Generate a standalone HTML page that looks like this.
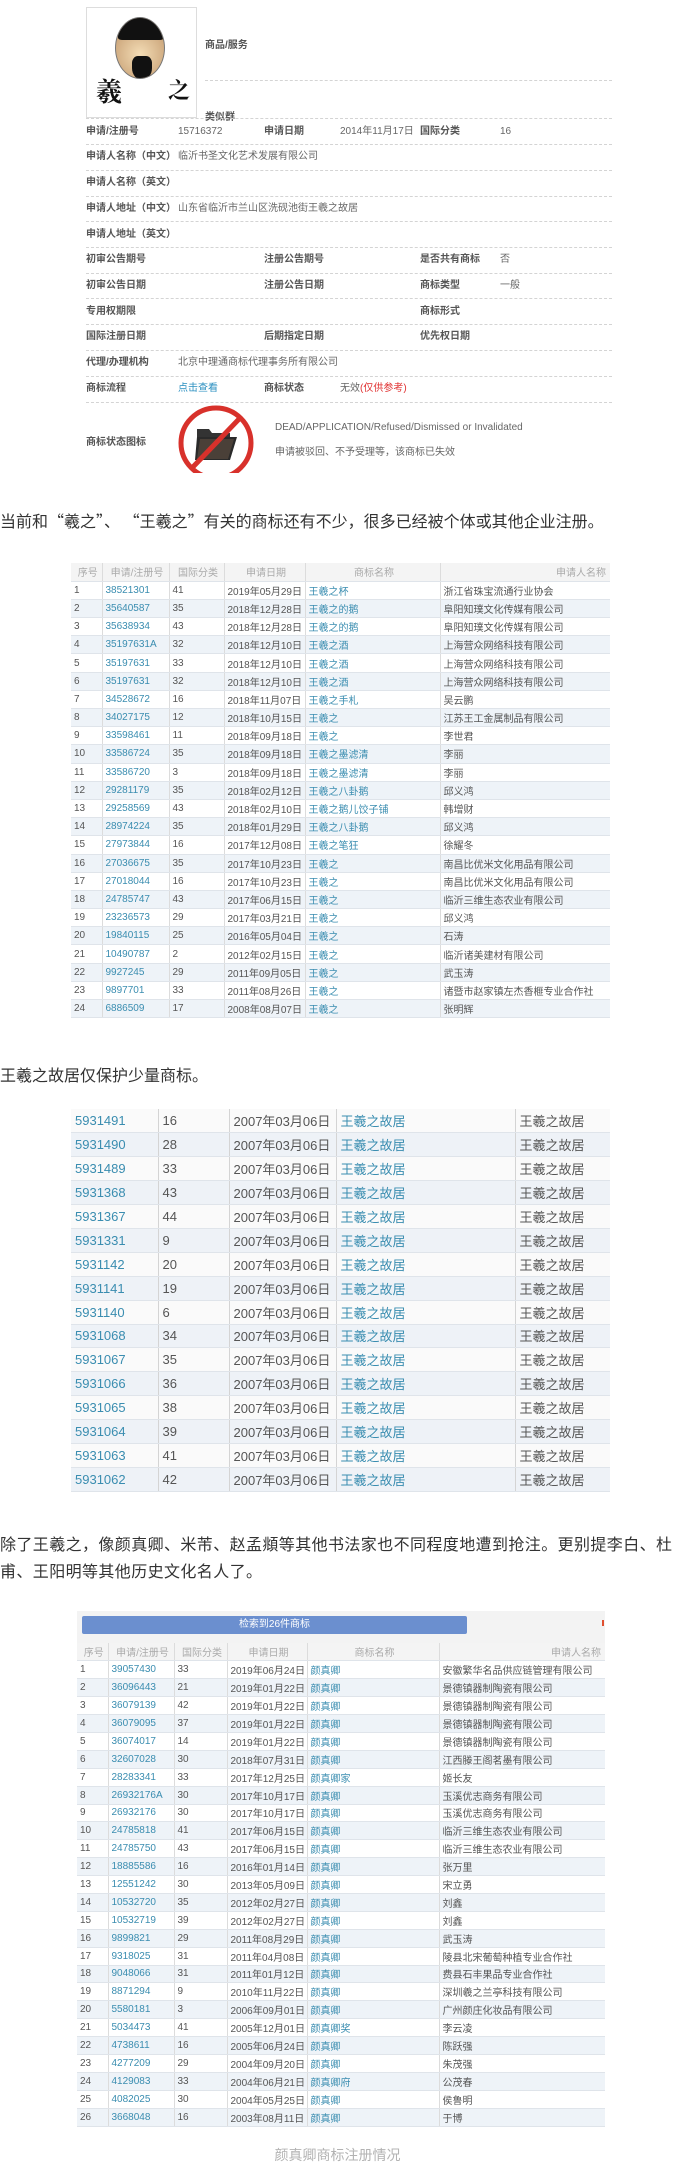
<!DOCTYPE html>
<html><head><meta charset="utf-8">
<style>
*{margin:0;padding:0;box-sizing:border-box}
body{width:675px;height:2176px;background:#fff;position:relative;overflow:hidden;font-family:"Liberation Sans","Noto Sans CJK SC",sans-serif;color:#333}
.a{position:absolute;white-space:nowrap}
.lb{font-size:10px;font-weight:bold;color:#555;line-height:12px}
.vl{font-size:10px;color:#666;line-height:12px}
.hl{position:absolute;left:86px;width:526px;border-top:1px dashed #d4d4d4;height:0}
.p{position:absolute;left:0;font-size:16px;color:#333;white-space:nowrap;line-height:20px;font-family:"Noto Sans CJK SC","WenQuanYi Zen Hei",sans-serif}
table{position:absolute;border-collapse:collapse;table-layout:fixed}
td{white-space:nowrap;overflow:hidden;padding:0 0 0 3px;border-bottom:1px solid #dfe4ea;border-left:1px solid #dcdcdc;color:#555}
td:first-child{border-left:none}
.lk{color:#3a8db0}
tr.h td{background:#f4f4f4;color:#aaa;text-align:center}
tr:nth-child(odd):not(.h) td{background:#eef3f8}
#t2{left:71px;top:563px;width:539px;font-size:10px}
#t2 tr{height:18.2px}
#t3{left:71px;top:1109px;width:539px;font-size:13px}
#t3 tr{height:23.9px}
#t3 td{padding-left:4px;border-left:1px solid #d4d4d4}
#t3 td:first-child{border-left:none}
#t3 tr:nth-child(even) td{background:#eef2f7}
#t3 tr:nth-child(odd) td{background:#fafafa}
#t4{left:77px;top:1643px;width:528px;font-size:10px}
#t4 tr{height:17.9px}
</style></head><body>

<div class="a" style="left:86px;top:7px;width:111px;height:111px;border:1px solid #ddd;background:#fff"></div>
<div class="a" style="left:115px;top:17px;width:50px;height:62px;border-radius:50%;background:radial-gradient(circle at 50% 60%,#f3dcb5,#c9a277 70%,#6b4a2a);border:1px solid #777;overflow:hidden">
  <div style="position:absolute;left:2px;top:0;width:46px;height:22px;background:#111;border-radius:40% 40% 10% 10%"></div>
  <div style="position:absolute;left:16px;top:38px;width:20px;height:24px;background:#111;border-radius:30% 30% 50% 50%"></div>
</div>
<div class="a" style="left:96px;top:72px;font-size:26px;font-weight:bold;font-family:'Noto Serif CJK SC',serif;color:#111">羲</div>
<div class="a" style="left:168px;top:74px;font-size:22px;font-weight:bold;font-family:'Noto Serif CJK SC',serif;color:#111">之</div>
<div class="a lb" style="left:205px;top:40px">商品/服务</div>
<div class="hl" style="left:205px;width:407px;top:80px"></div>
<div class="a lb" style="left:205px;top:112px">类似群</div>
<div class="hl" style="top:118px"></div>
<div class="a lb" style="left:86px;top:126px">申请/注册号</div><div class="a vl" style="left:178px;top:126px">15716372</div>
<div class="a lb" style="left:264px;top:126px">申请日期</div><div class="a vl" style="left:340px;top:126px">2014年11月17日</div>
<div class="a lb" style="left:420px;top:126px">国际分类</div><div class="a vl" style="left:500px;top:126px">16</div>
<div class="hl" style="top:144px"></div>
<div class="a lb" style="left:86px;top:151px">申请人名称（中文）</div><div class="a vl" style="left:178px;top:151px">临沂书圣文化艺术发展有限公司</div>
<div class="hl" style="top:170px"></div>
<div class="a lb" style="left:86px;top:177px">申请人名称（英文）</div>
<div class="hl" style="top:196px"></div>
<div class="a lb" style="left:86px;top:203px">申请人地址（中文）</div><div class="a vl" style="left:178px;top:203px">山东省临沂市兰山区洗砚池街王羲之故居</div>
<div class="hl" style="top:221px"></div>
<div class="a lb" style="left:86px;top:229px">申请人地址（英文）</div>
<div class="hl" style="top:247px"></div>
<div class="a lb" style="left:86px;top:254px">初审公告期号</div><div class="a lb" style="left:264px;top:254px">注册公告期号</div><div class="a lb" style="left:420px;top:254px">是否共有商标</div><div class="a vl" style="left:500px;top:254px">否</div>
<div class="hl" style="top:273px"></div>
<div class="a lb" style="left:86px;top:280px">初审公告日期</div><div class="a lb" style="left:264px;top:280px">注册公告日期</div><div class="a lb" style="left:420px;top:280px">商标类型</div><div class="a vl" style="left:500px;top:280px">一般</div>
<div class="hl" style="top:298px"></div>
<div class="a lb" style="left:86px;top:306px">专用权期限</div><div class="a lb" style="left:420px;top:306px">商标形式</div>
<div class="hl" style="top:324px"></div>
<div class="a lb" style="left:86px;top:331px">国际注册日期</div><div class="a lb" style="left:264px;top:331px">后期指定日期</div><div class="a lb" style="left:420px;top:331px">优先权日期</div>
<div class="hl" style="top:350px"></div>
<div class="a lb" style="left:86px;top:357px">代理/办理机构</div><div class="a vl" style="left:178px;top:357px">北京中理通商标代理事务所有限公司</div>
<div class="hl" style="top:376px"></div>
<div class="a lb" style="left:86px;top:383px">商标流程</div><div class="a vl" style="left:178px;top:383px;color:#2a8fc0">点击查看</div>
<div class="a lb" style="left:264px;top:383px">商标状态</div><div class="a vl" style="left:340px;top:383px">无效<span style="color:#e03030">(仅供参考)</span></div>
<div class="hl" style="top:402px"></div>
<div class="a lb" style="left:86px;top:437px">商标状态图标</div>
<svg class="a" style="left:176px;top:403px" width="80" height="70" viewBox="0 0 80 70">
  <defs><clipPath id="c"><rect x="0" y="0" width="80" height="70"/></clipPath></defs>
  <g clip-path="url(#c)">
  <path d="M21 26 h12 l3 4 h18 v4 H21z" fill="#333"/>
  <path d="M21 34 h35 l5 0 -7 23 H19z" fill="#2a2a2a"/>
  <path d="M24 36 h34 l-6 20 H21z" fill="#4a4038"/>
  <circle cx="40" cy="40" r="35" fill="none" stroke="#d8312b" stroke-width="5"/>
  <line x1="64" y1="15" x2="15" y2="66" stroke="#d8312b" stroke-width="5"/>
  </g>
</svg>
<div class="a vl" style="left:275px;top:422px;font-size:10px;color:#666">DEAD/APPLICATION/Refused/Dismissed or Invalidated</div>
<div class="a vl" style="left:275px;top:447px">申请被驳回、不予受理等，该商标已失效</div>

<div class="p" style="top:510px">当前和“羲之”、 “王羲之”有关的商标还有不少，很多已经被个体或其他企业注册。</div>

<table id="t2">
<colgroup><col style="width:31px"><col style="width:67px"><col style="width:55px"><col style="width:81px"><col style="width:135px"><col style="width:170px"></colgroup>
<tr class="h"><td>序号</td><td>申请/注册号</td><td>国际分类</td><td>申请日期</td><td>商标名称</td><td style="text-align:right;padding-right:4px">申请人名称</td></tr>
<tr><td>1</td><td class="lk">38521301</td><td>41</td><td>2019年05月29日</td><td class="lk">王羲之杯</td><td>浙江省珠宝流通行业协会</td></tr>
<tr><td>2</td><td class="lk">35640587</td><td>35</td><td>2018年12月28日</td><td class="lk">王羲之的鹅</td><td>阜阳知璞文化传媒有限公司</td></tr>
<tr><td>3</td><td class="lk">35638934</td><td>43</td><td>2018年12月28日</td><td class="lk">王羲之的鹅</td><td>阜阳知璞文化传媒有限公司</td></tr>
<tr><td>4</td><td class="lk">35197631A</td><td>32</td><td>2018年12月10日</td><td class="lk">王羲之酒</td><td>上海营众网络科技有限公司</td></tr>
<tr><td>5</td><td class="lk">35197631</td><td>33</td><td>2018年12月10日</td><td class="lk">王羲之酒</td><td>上海营众网络科技有限公司</td></tr>
<tr><td>6</td><td class="lk">35197631</td><td>32</td><td>2018年12月10日</td><td class="lk">王羲之酒</td><td>上海营众网络科技有限公司</td></tr>
<tr><td>7</td><td class="lk">34528672</td><td>16</td><td>2018年11月07日</td><td class="lk">王羲之手札</td><td>吴云鹏</td></tr>
<tr><td>8</td><td class="lk">34027175</td><td>12</td><td>2018年10月15日</td><td class="lk">王羲之</td><td>江苏王工金属制品有限公司</td></tr>
<tr><td>9</td><td class="lk">33598461</td><td>11</td><td>2018年09月18日</td><td class="lk">王羲之</td><td>李世君</td></tr>
<tr><td>10</td><td class="lk">33586724</td><td>35</td><td>2018年09月18日</td><td class="lk">王羲之墨滤清</td><td>李丽</td></tr>
<tr><td>11</td><td class="lk">33586720</td><td>3</td><td>2018年09月18日</td><td class="lk">王羲之墨滤清</td><td>李丽</td></tr>
<tr><td>12</td><td class="lk">29281179</td><td>35</td><td>2018年02月12日</td><td class="lk">王羲之八卦鹅</td><td>邱义鸿</td></tr>
<tr><td>13</td><td class="lk">29258569</td><td>43</td><td>2018年02月10日</td><td class="lk">王羲之鹅儿饺子铺</td><td>韩增财</td></tr>
<tr><td>14</td><td class="lk">28974224</td><td>35</td><td>2018年01月29日</td><td class="lk">王羲之八卦鹅</td><td>邱义鸿</td></tr>
<tr><td>15</td><td class="lk">27973844</td><td>16</td><td>2017年12月08日</td><td class="lk">王羲之笔狂</td><td>徐耀冬</td></tr>
<tr><td>16</td><td class="lk">27036675</td><td>35</td><td>2017年10月23日</td><td class="lk">王羲之</td><td>南昌比优米文化用品有限公司</td></tr>
<tr><td>17</td><td class="lk">27018044</td><td>16</td><td>2017年10月23日</td><td class="lk">王羲之</td><td>南昌比优米文化用品有限公司</td></tr>
<tr><td>18</td><td class="lk">24785747</td><td>43</td><td>2017年06月15日</td><td class="lk">王羲之</td><td>临沂三维生态农业有限公司</td></tr>
<tr><td>19</td><td class="lk">23236573</td><td>29</td><td>2017年03月21日</td><td class="lk">王羲之</td><td>邱义鸿</td></tr>
<tr><td>20</td><td class="lk">19840115</td><td>25</td><td>2016年05月04日</td><td class="lk">王羲之</td><td>石涛</td></tr>
<tr><td>21</td><td class="lk">10490787</td><td>2</td><td>2012年02月15日</td><td class="lk">王羲之</td><td>临沂诸美建材有限公司</td></tr>
<tr><td>22</td><td class="lk">9927245</td><td>29</td><td>2011年09月05日</td><td class="lk">王羲之</td><td>武玉涛</td></tr>
<tr><td>23</td><td class="lk">9897701</td><td>33</td><td>2011年08月26日</td><td class="lk">王羲之</td><td>诸暨市赵家镇左杰香榧专业合作社</td></tr>
<tr><td>24</td><td class="lk">6886509</td><td>17</td><td>2008年08月07日</td><td class="lk">王羲之</td><td>张明辉</td></tr>
</table>

<div class="p" style="top:1064px">王羲之故居仅保护少量商标。</div>

<table id="t3">
<colgroup><col style="width:87px"><col style="width:71px"><col style="width:107px"><col style="width:179px"><col style="width:95px"></colgroup>
<tr><td class="lk">5931491</td><td>16</td><td>2007年03月06日</td><td class="lk">王羲之故居</td><td>王羲之故居</td></tr>
<tr><td class="lk">5931490</td><td>28</td><td>2007年03月06日</td><td class="lk">王羲之故居</td><td>王羲之故居</td></tr>
<tr><td class="lk">5931489</td><td>33</td><td>2007年03月06日</td><td class="lk">王羲之故居</td><td>王羲之故居</td></tr>
<tr><td class="lk">5931368</td><td>43</td><td>2007年03月06日</td><td class="lk">王羲之故居</td><td>王羲之故居</td></tr>
<tr><td class="lk">5931367</td><td>44</td><td>2007年03月06日</td><td class="lk">王羲之故居</td><td>王羲之故居</td></tr>
<tr><td class="lk">5931331</td><td>9</td><td>2007年03月06日</td><td class="lk">王羲之故居</td><td>王羲之故居</td></tr>
<tr><td class="lk">5931142</td><td>20</td><td>2007年03月06日</td><td class="lk">王羲之故居</td><td>王羲之故居</td></tr>
<tr><td class="lk">5931141</td><td>19</td><td>2007年03月06日</td><td class="lk">王羲之故居</td><td>王羲之故居</td></tr>
<tr><td class="lk">5931140</td><td>6</td><td>2007年03月06日</td><td class="lk">王羲之故居</td><td>王羲之故居</td></tr>
<tr><td class="lk">5931068</td><td>34</td><td>2007年03月06日</td><td class="lk">王羲之故居</td><td>王羲之故居</td></tr>
<tr><td class="lk">5931067</td><td>35</td><td>2007年03月06日</td><td class="lk">王羲之故居</td><td>王羲之故居</td></tr>
<tr><td class="lk">5931066</td><td>36</td><td>2007年03月06日</td><td class="lk">王羲之故居</td><td>王羲之故居</td></tr>
<tr><td class="lk">5931065</td><td>38</td><td>2007年03月06日</td><td class="lk">王羲之故居</td><td>王羲之故居</td></tr>
<tr><td class="lk">5931064</td><td>39</td><td>2007年03月06日</td><td class="lk">王羲之故居</td><td>王羲之故居</td></tr>
<tr><td class="lk">5931063</td><td>41</td><td>2007年03月06日</td><td class="lk">王羲之故居</td><td>王羲之故居</td></tr>
<tr><td class="lk">5931062</td><td>42</td><td>2007年03月06日</td><td class="lk">王羲之故居</td><td>王羲之故居</td></tr>
</table>

<div class="p" style="top:1533px;letter-spacing:0.4px">除了王羲之，像颜真卿、米芾、赵孟頫等其他书法家也不同程度地遭到抢注。更别提李白、杜</div>
<div class="p" style="top:1560px;letter-spacing:0.4px">甫、王阳明等其他历史文化名人了。</div>

<div class="a" style="left:77px;top:1611px;width:528px;height:32px;background:#f3f3f3"></div>
<div class="a" style="left:82px;top:1616px;width:385px;height:18px;background:#6b8fcf;border-radius:2px;color:#fff;font-size:10px;line-height:18px;text-align:center">检索到26件商标</div>
<div class="a" style="left:602px;top:1620px;width:2px;height:6px;background:#e05030"></div>

<table id="t4">
<colgroup><col style="width:31px"><col style="width:66px"><col style="width:53px"><col style="width:80px"><col style="width:132px"><col style="width:166px"></colgroup>
<tr class="h"><td>序号</td><td>申请/注册号</td><td>国际分类</td><td>申请日期</td><td>商标名称</td><td style="text-align:right;padding-right:4px">申请人名称</td></tr>
<tr><td>1</td><td class="lk">39057430</td><td>33</td><td>2019年06月24日</td><td class="lk">颜真卿</td><td>安徽繁华名品供应链管理有限公司</td></tr>
<tr><td>2</td><td class="lk">36096443</td><td>21</td><td>2019年01月22日</td><td class="lk">颜真卿</td><td>景德镇器制陶瓷有限公司</td></tr>
<tr><td>3</td><td class="lk">36079139</td><td>42</td><td>2019年01月22日</td><td class="lk">颜真卿</td><td>景德镇器制陶瓷有限公司</td></tr>
<tr><td>4</td><td class="lk">36079095</td><td>37</td><td>2019年01月22日</td><td class="lk">颜真卿</td><td>景德镇器制陶瓷有限公司</td></tr>
<tr><td>5</td><td class="lk">36074017</td><td>14</td><td>2019年01月22日</td><td class="lk">颜真卿</td><td>景德镇器制陶瓷有限公司</td></tr>
<tr><td>6</td><td class="lk">32607028</td><td>30</td><td>2018年07月31日</td><td class="lk">颜真卿</td><td>江西滕王阁茗墨有限公司</td></tr>
<tr><td>7</td><td class="lk">28283341</td><td>33</td><td>2017年12月25日</td><td class="lk">颜真卿家</td><td>姬长友</td></tr>
<tr><td>8</td><td class="lk">26932176A</td><td>30</td><td>2017年10月17日</td><td class="lk">颜真卿</td><td>玉溪优志商务有限公司</td></tr>
<tr><td>9</td><td class="lk">26932176</td><td>30</td><td>2017年10月17日</td><td class="lk">颜真卿</td><td>玉溪优志商务有限公司</td></tr>
<tr><td>10</td><td class="lk">24785818</td><td>41</td><td>2017年06月15日</td><td class="lk">颜真卿</td><td>临沂三维生态农业有限公司</td></tr>
<tr><td>11</td><td class="lk">24785750</td><td>43</td><td>2017年06月15日</td><td class="lk">颜真卿</td><td>临沂三维生态农业有限公司</td></tr>
<tr><td>12</td><td class="lk">18885586</td><td>16</td><td>2016年01月14日</td><td class="lk">颜真卿</td><td>张万里</td></tr>
<tr><td>13</td><td class="lk">12551242</td><td>30</td><td>2013年05月09日</td><td class="lk">颜真卿</td><td>宋立勇</td></tr>
<tr><td>14</td><td class="lk">10532720</td><td>35</td><td>2012年02月27日</td><td class="lk">颜真卿</td><td>刘鑫</td></tr>
<tr><td>15</td><td class="lk">10532719</td><td>39</td><td>2012年02月27日</td><td class="lk">颜真卿</td><td>刘鑫</td></tr>
<tr><td>16</td><td class="lk">9899821</td><td>29</td><td>2011年08月29日</td><td class="lk">颜真卿</td><td>武玉涛</td></tr>
<tr><td>17</td><td class="lk">9318025</td><td>31</td><td>2011年04月08日</td><td class="lk">颜真卿</td><td>陵县北宋葡萄种植专业合作社</td></tr>
<tr><td>18</td><td class="lk">9048066</td><td>31</td><td>2011年01月12日</td><td class="lk">颜真卿</td><td>费县石丰果品专业合作社</td></tr>
<tr><td>19</td><td class="lk">8871294</td><td>9</td><td>2010年11月22日</td><td class="lk">颜真卿</td><td>深圳羲之兰亭科技有限公司</td></tr>
<tr><td>20</td><td class="lk">5580181</td><td>3</td><td>2006年09月01日</td><td class="lk">颜真卿</td><td>广州颜庄化妆品有限公司</td></tr>
<tr><td>21</td><td class="lk">5034473</td><td>41</td><td>2005年12月01日</td><td class="lk">颜真卿奖</td><td>李云凌</td></tr>
<tr><td>22</td><td class="lk">4738611</td><td>16</td><td>2005年06月24日</td><td class="lk">颜真卿</td><td>陈跃强</td></tr>
<tr><td>23</td><td class="lk">4277209</td><td>29</td><td>2004年09月20日</td><td class="lk">颜真卿</td><td>朱茂强</td></tr>
<tr><td>24</td><td class="lk">4129083</td><td>33</td><td>2004年06月21日</td><td class="lk">颜真卿府</td><td>公茂春</td></tr>
<tr><td>25</td><td class="lk">4082025</td><td>30</td><td>2004年05月25日</td><td class="lk">颜真卿</td><td>侯鲁明</td></tr>
<tr><td>26</td><td class="lk">3668048</td><td>16</td><td>2003年08月11日</td><td class="lk">颜真卿</td><td>于博</td></tr>
</table>

<div class="a" style="left:0;width:675px;top:2145px;text-align:center;font-size:14px;color:#b3b3b3;font-family:'Noto Sans CJK SC',sans-serif">颜真卿商标注册情况</div>
</body></html>
